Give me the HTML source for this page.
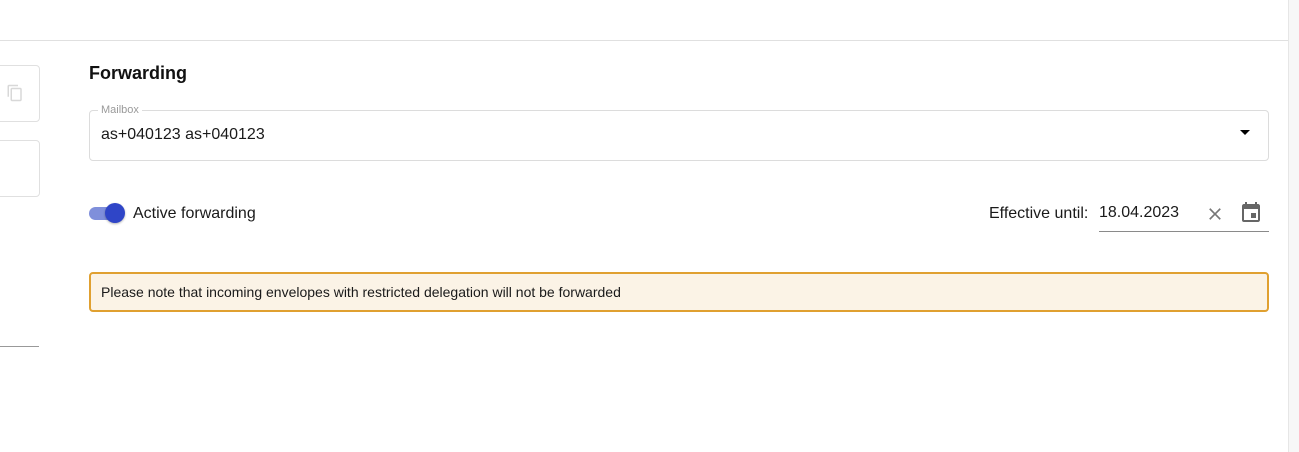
<!DOCTYPE html>
<html><head><style>
body{margin:0;width:1299px;height:452px;background:#fff;font-family:"Liberation Sans",sans-serif;position:relative;overflow:hidden;color:#1a1a1a}
.a{position:absolute}
</style></head><body>
<div class="a" style="left:0;top:40px;width:1289px;height:1px;background:#e0e0e0"></div>
<div class="a" style="left:1288px;top:0;width:11px;height:452px;background:#f7f7f7;border-left:1px solid #e6e6e6"></div>
<div class="a" style="left:-10px;top:65px;width:48px;height:55px;border:1px solid #e0e0e0;border-radius:4px"></div>
<svg class="a" style="left:6px;top:84px" width="18" height="18" viewBox="0 0 24 24"><path fill="#d8d8d8" d="M16 1H4c-1.1 0-2 .9-2 2v14h2V3h12V1zm3 4H8c-1.1 0-2 .9-2 2v14c0 1.1.9 2 2 2h11c1.1 0 2-.9 2-2V7c0-1.100-.9-2-2-2zm0 16H8V7h11v14z"/></svg>
<div class="a" style="left:-10px;top:140px;width:48px;height:55px;border:1px solid #e0e0e0;border-radius:4px"></div>
<div class="a" style="left:0;top:346px;width:39px;height:1px;background:#999"></div>
<div class="a" style="left:89px;top:63px;font-size:18px;font-weight:bold;color:#111">Forwarding</div>
<div class="a" style="left:89px;top:110px;width:1178px;height:49px;border:1px solid #dcdcdc;border-radius:4px"></div>
<div class="a" style="left:98px;top:104px;padding:0 3px;background:#fff;font-size:11px;color:#9a9a9a">Mailbox</div>
<div class="a" style="left:101px;top:126px;font-size:16px;color:#1a1a1a">as+040123 as+040123</div>
<div class="a" style="left:1240px;top:130px;width:0;height:0;border-left:5px solid transparent;border-right:5px solid transparent;border-top:5px solid #000"></div>
<div class="a" style="left:89px;top:207px;width:32px;height:13px;border-radius:7px;background:#7f8fdb"></div>
<div class="a" style="left:105px;top:203px;width:20px;height:20px;border-radius:50%;background:#2f45c7;box-shadow:0 1px 2px rgba(0,0,0,.3)"></div>
<div class="a" style="left:133px;top:205px;font-size:16px">Active forwarding</div>
<div class="a" style="left:989px;top:205px;font-size:16px">Effective until:</div>
<div class="a" style="left:1099px;top:204px;font-size:16px">18.04.2023</div>
<div class="a" style="left:1099px;top:231px;width:170px;height:1px;background:#8a8a8a"></div>
<svg class="a" style="left:1205px;top:204px" width="20" height="20" viewBox="0 0 24 24"><path fill="#777" d="M19 6.41L17.59 5 12 10.59 6.41 5 5 6.41 10.59 12 5 17.59 6.41 19 12 13.41 17.59 19 19 17.59 13.41 12z"/></svg>
<svg class="a" style="left:1239px;top:201px" width="24" height="24" viewBox="0 0 24 24"><path fill="#666" d="M17 12h-5v5h5v-5zM16 1v2H8V1H6v2H5c-1.11 0-2 .9-2 2v14a2 2 0 0 0 2 2h14c1.1 0 2-.9 2-2V5c0-1.1-.9-2-2-2h-1V1h-2zm3 18H5V8h14v11z"/></svg>
<div class="a" style="left:89px;top:272px;width:1176px;height:36px;border:2px solid #e0a030;border-radius:4px;background:#fbf3e6"></div>
<div class="a" style="left:101px;top:284px;font-size:14px;color:#1a1a1a">Please note that incoming envelopes with restricted delegation will not be forwarded</div>
</body></html>
